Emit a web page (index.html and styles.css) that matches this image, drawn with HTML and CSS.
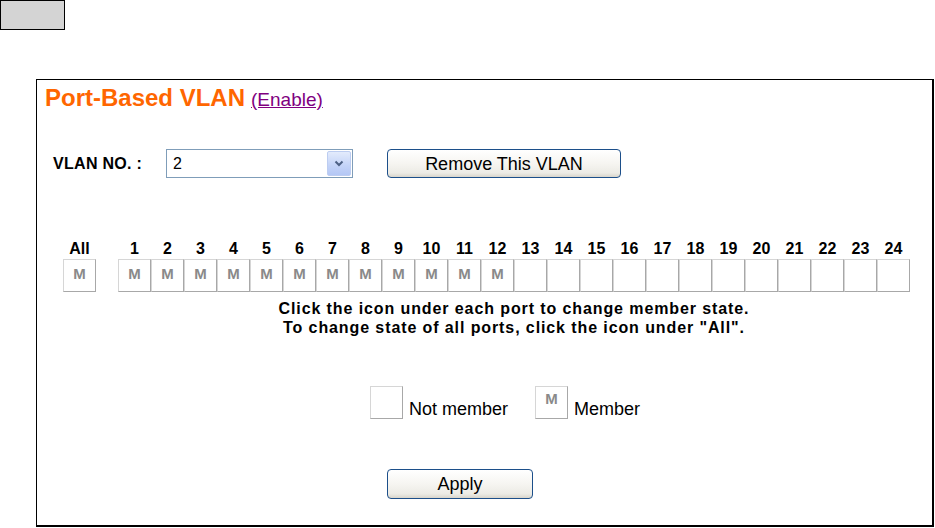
FILE: index.html
```html
<!DOCTYPE html>
<html>
<head>
<meta charset="utf-8">
<title>Port-Based VLAN</title>
<link rel="stylesheet" href="styles.css">
</head>
<body>
<div class="tab"></div>
<div class="panel">
  <div class="title"><span class="title-text">Port-Based VLAN</span><a class="enable" href="#">(Enable)</a></div>
  <div class="vlan-row">
    <span class="label">VLAN NO. :</span>
    <div class="select">
      <span class="sel-val">2</span>
      <span class="sel-btn"><svg width="10" height="7" viewBox="0 0 10 7"><path d="M1.5 1.5 L5 5 L8.5 1.5" fill="none" stroke="#4d6185" stroke-width="2"/></svg></span>
    </div>
    <button class="btn btn-remove">Remove This VLAN</button>
  </div>
  <div class="ports">
    <div class="col-all">
      <div class="num">All</div>
      <div class="cell">M</div>
    </div>
    <div class="col-ports">
      <div class="grid">
        <div class="num">1</div><div class="num">2</div><div class="num">3</div><div class="num">4</div><div class="num">5</div><div class="num">6</div><div class="num">7</div><div class="num">8</div><div class="num">9</div><div class="num">10</div><div class="num">11</div><div class="num">12</div><div class="num">13</div><div class="num">14</div><div class="num">15</div><div class="num">16</div><div class="num">17</div><div class="num">18</div><div class="num">19</div><div class="num">20</div><div class="num">21</div><div class="num">22</div><div class="num">23</div><div class="num">24</div>
        <div class="cell">M</div><div class="cell">M</div><div class="cell">M</div><div class="cell">M</div><div class="cell">M</div><div class="cell">M</div><div class="cell">M</div><div class="cell">M</div><div class="cell">M</div><div class="cell">M</div><div class="cell">M</div><div class="cell">M</div><div class="cell"></div><div class="cell"></div><div class="cell"></div><div class="cell"></div><div class="cell"></div><div class="cell"></div><div class="cell"></div><div class="cell"></div><div class="cell"></div><div class="cell"></div><div class="cell"></div><div class="cell"></div>
      </div>
      <div class="hint">Click the icon under each port to change member state.<br>To change state of all ports, click the icon under "All".</div>
    </div>
  </div>
  <div class="legend">
    <div class="lbox"></div><span class="ltext">Not member</span>
    <div class="lbox lbox-m">M</div><span class="ltext">Member</span>
  </div>
  <button class="btn btn-apply">Apply</button>
</div>
</body>
</html>
```

FILE: styles.css
```css
* { box-sizing: border-box; }
body {
  margin: 0;
  background: #fff;
  font-family: "Liberation Sans", Arial, sans-serif;
  color: #000;
}
.tab {
  width: 65px;
  height: 30px;
  background: #d4d4d4;
  border: 1px solid #000;
}
.panel {
  margin: 49px 0 0 36px;
  width: 898px;
  height: 448px;
  border-style: solid;
  border-color: #000;
  border-width: 1px 2px 2px 1px;
}
.title {
  margin-top: 4px;
  padding-left: 8px;
  line-height: 28px;
  height: 28px;
  white-space: nowrap;
}
.title-text {
  font-size: 24px;
  font-weight: bold;
  color: #ff6600;
}
.enable {
  margin-left: 6px;
  font-size: 19px;
  color: #800080;
  text-decoration: underline;
}
.vlan-row {
  margin-top: 37px;
  margin-left: 16px;
  display: flex;
  align-items: center;
  height: 29px;
}
.label {
  width: 113px;
  font-size: 16px;
  font-weight: bold;
  letter-spacing: 0.3px;
}
.select {
  width: 187px;
  height: 29px;
  border: 1px solid #7f9db9;
  background: #fff;
  display: flex;
  align-items: center;
  justify-content: space-between;
  padding: 1px 1px 1px 6px;
}
.sel-val {
  font-size: 16px;
}
.sel-btn {
  width: 24px;
  height: 25px;
  border: 1px solid #bdcdf1;
  border-radius: 2px;
  background: linear-gradient(#e3ebfc, #c3d3f8 60%, #b4c7f5);
  display: flex;
  align-items: center;
  justify-content: center;
}
.btn {
  font-family: "Liberation Sans", Arial, sans-serif;
  font-size: 18px;
  color: #000;
  border: 1px solid #1c4f8a;
  border-radius: 4px;
  background: linear-gradient(#ffffff, #f6f5f1 50%, #ecebe5 85%, #d8d5cb);
  padding: 0;
  line-height: 20px;
}
.btn-remove {
  margin-left: 34px;
  width: 234px;
  height: 29px;
}
.ports {
  margin-top: 62px;
  margin-left: 26px;
  display: flex;
  gap: 22px;
}
.col-all {
  width: 33px;
  display: flex;
  flex-direction: column;
  gap: 1px;
}
.num {
  height: 18px;
  line-height: 18px;
  font-size: 16px;
  font-weight: bold;
  text-align: center;
}
.cell {
  width: 33px;
  height: 33px;
  border: 1px solid;
  border-color: #d6d6d6 #a8a8a8 #a8a8a8 #d6d6d6;
  color: #8a8a8a;
  font-size: 15px;
  font-weight: bold;
  text-align: center;
  line-height: 27px;
}
.col-ports {
  width: 792px;
}
.grid {
  display: grid;
  grid-template-columns: repeat(24, 33px);
  grid-template-rows: 18px 33px;
  row-gap: 1px;
}
.hint {
  margin-top: 7px;
  text-align: center;
  font-size: 16px;
  font-weight: bold;
  line-height: 19px;
  letter-spacing: 0.9px;
}
.legend {
  margin-top: 49px;
  margin-left: 333px;
  display: flex;
  align-items: flex-end;
}
.lbox {
  width: 33px;
  height: 33px;
  border: 1px solid;
  border-color: #d6d6d6 #a8a8a8 #a8a8a8 #d6d6d6;
  color: #8a8a8a;
  font-size: 15px;
  font-weight: bold;
  text-align: center;
  line-height: 15px;
  padding-top: 4px;
}
.lbox-m {
  margin-left: 27px;
}
.ltext {
  margin-left: 6px;
  font-size: 18px;
  line-height: 20px;
}
.btn-apply {
  display: block;
  margin-top: 50px;
  margin-left: 350px;
  width: 146px;
  height: 30px;
}
```
